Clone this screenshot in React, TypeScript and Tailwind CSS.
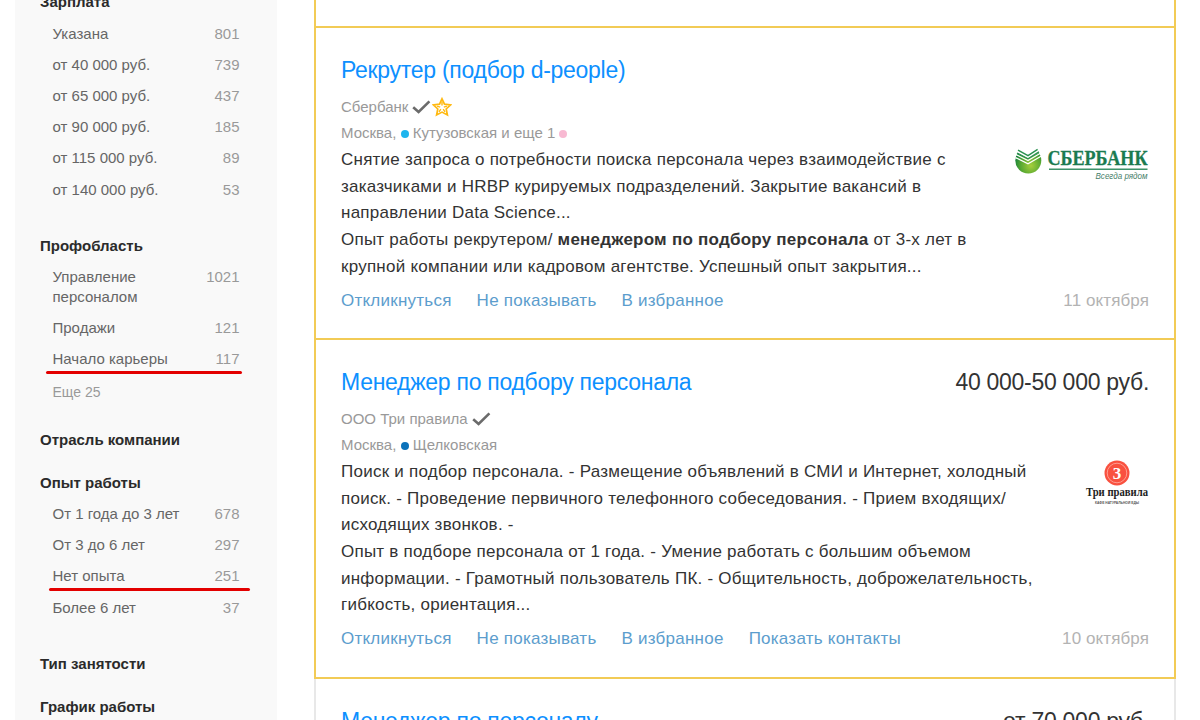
import type { ReactNode } from "react";

type FilterItem = { label: ReactNode; count: number; mark?: string };
type FilterGroup = {
  title: string;
  items?: FilterItem[];
  more?: string;
};

const filters: FilterGroup[] = [
  {
    title: "Зарплата",
    items: [
      { label: "Указана", count: 801 },
      { label: "от 40 000 руб.", count: 739 },
      { label: "от 65 000 руб.", count: 437 },
      { label: "от 90 000 руб.", count: 185 },
      { label: "от 115 000 руб.", count: 89 },
      { label: "от 140 000 руб.", count: 53 },
    ],
  },
  {
    title: "Профобласть",
    items: [
      { label: "Управление персоналом", count: 1021 },
      { label: "Продажи", count: 121 },
      { label: "Начало карьеры", count: 117, mark: "-left-[6.5px] w-[196px] top-[21.5px]" },
    ],
    more: "Еще 25",
  },
  { title: "Отрасль компании" },
  {
    title: "Опыт работы",
    items: [
      { label: "От 1 года до 3 лет", count: 678 },
      { label: "От 3 до 6 лет", count: 297 },
      { label: "Нет опыта", count: 251, mark: "-left-[3.5px] w-[201px] top-[21.5px]" },
      { label: "Более 6 лет", count: 37 },
    ],
  },
  { title: "Тип занятости" },
  { title: "График работы" },
];

const Filter = ({ group }: { group: FilterGroup }) => (
  <section className="mb-[23px]">
    <h3 className="text-[15px] font-bold text-[#2b2b2b]">{group.title}</h3>
    {group.items && (
      <ul className={group.more ? "pl-[12.5px]" : "pb-3.5 pl-[12.5px]"}>
        {group.items.map((item, i) => (
          <li key={i} className="relative mt-[11.7px] flex justify-between">
            <span className="w-[130px] text-[#666]">{item.label}</span>
            <span className="text-[#999]">{item.count}</span>
            {item.mark && (
              <span
                className={`absolute h-[3px] rounded-full bg-[#e30000] ${item.mark}`}
              />
            )}
          </li>
        ))}
      </ul>
    )}
    {group.more && (
      <div className="mt-[14.5px] pb-[4.7px] pl-[12.5px] text-sm leading-[19.5px] text-[#999]">
        {group.more}
      </div>
    )}
  </section>
);

const Check = () => (
  <svg className="ml-1 h-[14px] w-[19px]" viewBox="0 0 19 14" fill="none">
    <path d="M1.2 7.2 6.6 12 17.4 1.4" stroke="#6b6b6b" strokeWidth="2.6" />
  </svg>
);

const Star = () => (
  <svg
    className="ml-px h-5 w-5"
    viewBox="0 0 20 20"
    fill="none"
    stroke="#ffb911"
  >
    <path
      d="M10 1.8 12.5 7.2 18.6 7.9 14.2 12 15.4 18 10 15.1 4.6 18 5.8 12 1.4 7.9 7.5 7.2Z"
      strokeWidth="1.7"
    />
    <path
      d="M10 4.5V8.6M14.9 9.2l-3.1 1M13 14.8l-1.8-2.6M7 14.8l1.8-2.6M5.1 9.2l3.1 1"
      strokeWidth="1.4"
    />
  </svg>
);

const Dot = ({ color }: { color: string }) => (
  <span className={`inline-block size-2 rounded-full ${color}`} />
);

const SberLogo = () => (
  <svg className="h-9 w-[135px] overflow-visible" viewBox="0 0 135 36">
    <defs>
      <radialGradient id="sber" cx="0.6" cy="0.7" r="0.65">
        <stop offset="0" stopColor="#a6cf3c" />
        <stop offset="0.6" stopColor="#58a831" />
        <stop offset="1" stopColor="#16823b" />
      </radialGradient>
    </defs>
    <circle cx="14.3" cy="13.5" r="13" fill="url(#sber)" />
    <path d="M0 0H28V4L14 11.5 2 5Z" fill="#fff" />
    <g fill="none" stroke="#2b9150" strokeWidth="1.4">
      <path d="M4 3.2 14 8.6 23.6 2.4" />
      <path d="M3 6 14 11.8 25 4.8" />
    </g>
    <g fill="none" stroke="#fff" strokeWidth="1.3">
      <path d="M2 7.6 14 13.6 26.4 6.2" />
      <path d="M1.6 10.6 14 16.8 27 9.2" />
    </g>
    <text
      x="33.5"
      y="18.2"
      fontFamily="Liberation Serif, serif"
      fontWeight="bold"
      fontSize="21"
      textLength="100"
      lengthAdjust="spacingAndGlyphs"
      fill="#1b7b50"
      stroke="#1b7b50"
      strokeWidth="0.3"
    >
      СБЕРБАНК
    </text>
    <path d="M35 22.3H133.5" stroke="#3c9168" strokeWidth="1.6" />
    <text
      x="81.5"
      y="32.4"
      fontFamily="Liberation Sans, sans-serif"
      fontStyle="italic"
      fontSize="8.5"
      textLength="52"
      lengthAdjust="spacingAndGlyphs"
      fill="#47806a"
    >
      Всегда рядом
    </text>
  </svg>
);

const TriLogo = () => (
  <svg className="h-12 w-16 overflow-visible" viewBox="0 0 64 48">
    <circle cx="32" cy="14" r="12.5" fill="#f9513f" />
    <circle cx="32" cy="14" r="9.8" fill="none" stroke="#ff9c90" strokeWidth="1" />
    <text
      x="32"
      y="19.5"
      textAnchor="middle"
      fontFamily="Liberation Serif, serif"
      fontWeight="bold"
      fontSize="17"
      fill="#fff"
    >
      3
    </text>
    <text
      x="1"
      y="37"
      fontFamily="Liberation Serif, serif"
      fontWeight="bold"
      fontSize="12.5"
      textLength="62"
      lengthAdjust="spacingAndGlyphs"
      fill="#222"
    >
      Три правила
    </text>
    <text
      x="10"
      y="45"
      fontFamily="Liberation Sans, sans-serif"
      fontWeight="bold"
      fontSize="3.5"
      textLength="44"
      lengthAdjust="spacingAndGlyphs"
      fill="#555"
    >
      КАФЕ НАТУРАЛЬНОЙ ЕДЫ
    </text>
  </svg>
);

type VacancyProps = {
  title: string;
  salary?: string;
  company: ReactNode;
  place: ReactNode;
  lines: ReactNode[];
  logo: ReactNode;
  actions: string[];
  date: string;
};

const Vacancy = (v: VacancyProps) => (
  <div className="pt-[27px] pr-[25px] pl-[25px]">
    <div className="flex justify-between text-[23px] leading-[30px] tracking-[-0.28px]">
      <h2 className="text-[#0d90ff]">{v.title}</h2>
      <span className="text-[#333]">{v.salary}</span>
    </div>
    <div className="mt-[8.5px] flex items-center text-[15px] leading-[26.7px] text-[#999]">
      {v.company}
    </div>
    <div className="text-[15px] leading-[26.7px] text-[#999]">{v.place}</div>
    <div className="flex justify-between">
      <div className="text-[17px] leading-[26.7px] tracking-[0.24px] whitespace-nowrap text-[#333]">
        {v.lines.map((line, i) => (
          <p key={i}>{line}</p>
        ))}
      </div>
      {v.logo}
    </div>
    <div className="mt-[7.1px] flex justify-between text-[17px] leading-[26.7px] tracking-[0.24px]">
      <div className="flex gap-[25px] text-[#5c9dcd]">
        {v.actions.map((action) => (
          <a key={action}>{action}</a>
        ))}
      </div>
      <span className="tracking-[0.1px] text-[#b3b3b3]">{v.date}</span>
    </div>
  </div>
);

const App = () => {
  return (
    <div className="flex h-[720px] w-[1200px] overflow-hidden bg-white font-['Liberation_Sans',Arial,sans-serif]">
      <aside className="ml-[15px] w-[262px] shrink-0 bg-[#f9f9f9] pr-[37.5px] pl-[25px] text-[15px] leading-[19.5px]">
        <div className="-mt-[7.6px]">
          {filters.map((group) => (
            <Filter key={group.title} group={group} />
          ))}
        </div>
      </aside>

      <main className="ml-[37px] w-[862px] shrink-0">
        <div className="h-[26px] border-x-2 border-[#f2cb56]" />
        <div className="h-[312px] border-x-2 border-t-2 border-[#f2cb56]">
          <Vacancy
            title="Рекрутер (подбор d-people)"
            company={
              <>
                Сбербанк <Check />
                <Star />
              </>
            }
            place={
              <>
                Москва, <Dot color="bg-[#1eb5ee]" /> Кутузовская и еще 1{" "}
                <Dot color="bg-[#f8b9d2]" />
              </>
            }
            lines={[
              "Снятие запроса о потребности поиска персонала через взаимодействие с",
              "заказчиками и HRBP курируемых подразделений. Закрытие вакансий в",
              "направлении Data Science...",
              <>
                Опыт работы рекрутером/ <b>менеджером по подбору персонала</b> от
                3-х лет в
              </>,
              "крупной компании или кадровом агентстве. Успешный опыт закрытия...",
            ]}
            logo={<SberLogo />}
            actions={["Откликнуться", "Не показывать", "В избранное"]}
            date="11 октября"
          />
        </div>
        <div className="h-[341px] border-2 border-[#f2cb56]">
          <Vacancy
            title="Менеджер по подбору персонала"
            salary="40 000-50 000 руб."
            company={
              <>
                ООО Три правила <Check />
              </>
            }
            place={
              <>
                Москва, <Dot color="bg-[#0b72ba]" /> Щелковская
              </>
            }
            lines={[
              "Поиск и подбор персонала. - Размещение объявлений в СМИ и Интернет, холодный",
              "поиск. - Проведение первичного телефонного собеседования. - Прием входящих/",
              "исходящих звонков. -",
              "Опыт в подборе персонала от 1 года. - Умение работать с большим объемом",
              "информации. - Грамотный пользователь ПК. - Общительность, доброжелательность,",
              "гибкость, ориентация...",
            ]}
            logo={<TriLogo />}
            actions={[
              "Откликнуться",
              "Не показывать",
              "В избранное",
              "Показать контакты",
            ]}
            date="10 октября"
          />
        </div>
        <div className="flex h-[60px] justify-between border-x-2 border-[#e8e8e8] px-[25px] pt-[27px] text-[23px] leading-[30px] tracking-[-0.28px]">
          <h2 className="text-[#0d90ff]">Менеджер по персоналу</h2>
          <span className="text-[#333]">от 70 000 руб.</span>
        </div>
      </main>
    </div>
  );
};

export default App;
